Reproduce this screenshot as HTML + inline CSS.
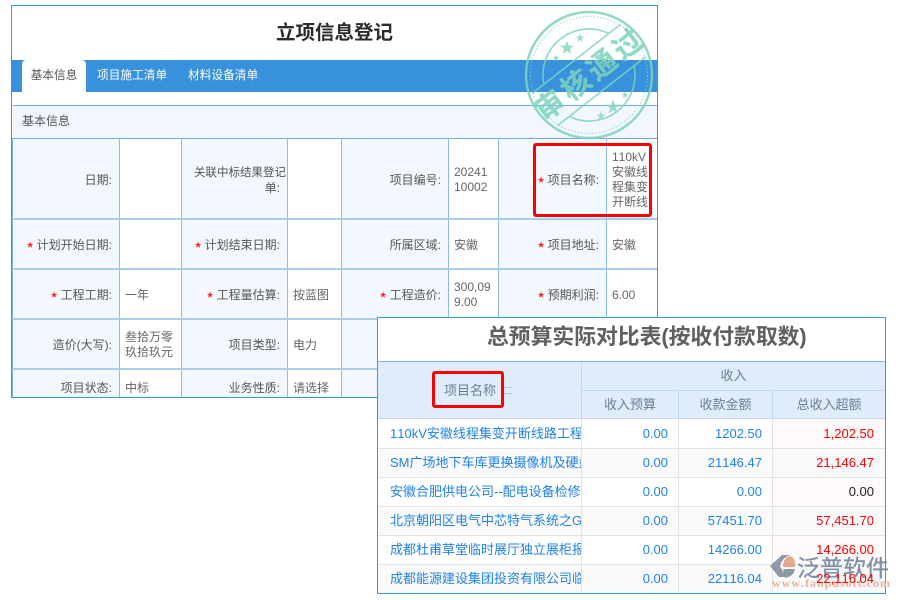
<!DOCTYPE html>
<html lang="zh"><head><meta charset="utf-8"><title>立项信息登记</title>
<style>
*{box-sizing:border-box}
html,body{margin:0;padding:0;background:#fff;width:900px;height:600px;overflow:hidden}
body{position:relative;font-family:"Liberation Sans","Noto Sans CJK SC",sans-serif;font-size:12px;color:#666;font-kerning:none}
.a{position:absolute}
#left{left:11px;top:5px;width:647px;height:393px;border:1px solid #2a9fd8;background:#fff;overflow:hidden}
#p2{left:377px;top:317px;width:509px;height:277px;border:1px solid #2a9fd8;background:#fff;overflow:hidden}
.c{position:absolute;display:flex;align-items:center;font-size:12px;line-height:15px;color:#666}
.l{justify-content:flex-end;text-align:right;padding-right:7px;color:#555}
.v{padding-left:5px}
.s{color:#f22;margin-right:3px;font-size:7px;line-height:15px}
.vl{position:absolute;width:1px;background:#8dbde6;top:132px;height:260px}
.hl{position:absolute;height:2px;background:#a9cdec;left:0;width:646px}
.n{position:absolute;left:12px;width:191px;white-space:nowrap;overflow:hidden;font-size:13px;color:#1e82ec;height:17px;line-height:17px}
.num{position:absolute;text-align:right;font-size:13px;color:#1e82ec;height:17px;line-height:17px}
.th{position:absolute;text-align:center;color:#6b7f92;font-size:13px;line-height:16px}
.red{position:absolute;border:3px solid #f00;border-radius:3px}
</style></head><body>
<div class="a" id="left">
<div class="a" style="left:0;width:645px;top:13px;text-align:center;font-size:19.5px;line-height:28px;font-weight:700;color:#2b2b2b">立项信息登记</div>
<div class="a" style="left:0;top:54px;width:646px;height:32px;background:#3891dc"></div>
<div class="a" style="left:10px;top:54px;width:64px;height:32px;background:#fff;border-radius:4px 4px 0 0;text-align:center;line-height:31px;font-size:11.7px;color:#555">基本信息</div>
<div class="a" style="left:85px;top:54px;line-height:31px;color:#fff;font-size:11.7px">项目施工清单</div>
<div class="a" style="left:176px;top:54px;line-height:31px;color:#fff;font-size:11.7px">材料设备清单</div>
<div class="a" style="left:1px;top:99px;width:645px;height:34px;background:#f2f6fe;border-top:1px solid #6fb0e0;border-bottom:1px solid #6fb0e0;line-height:31px;padding-left:9px;color:#555">基本信息</div>
<div class="a" style="left:1px;top:133px;width:106px;height:260px;background:#f2f8fe"></div>
<div class="a" style="left:170px;top:133px;width:105px;height:260px;background:#f2f8fe"></div>
<div class="a" style="left:330px;top:133px;width:106px;height:260px;background:#f2f8fe"></div>
<div class="a" style="left:487px;top:133px;width:107px;height:260px;background:#f2f8fe"></div>
<div class="vl" style="left:107px"></div><div class="vl" style="left:169px"></div><div class="vl" style="left:275px"></div><div class="vl" style="left:329px"></div><div class="vl" style="left:436px"></div><div class="vl" style="left:486px"></div><div class="vl" style="left:594px"></div>
<div class="a" style="left:0;top:132px;width:1px;height:260px;background:#6fb0e0"></div>
<div class="hl" style="top:212px"></div><div class="hl" style="top:262px"></div><div class="hl" style="top:312px"></div><div class="hl" style="top:362px"></div>

<div class="c l" style="left:1px;top:135px;width:106px;height:79px">日期:</div>
<div class="c l" style="left:170px;top:135px;width:105px;height:79px"><span><span style="position:relative;left:6px;white-space:nowrap;font-size:11.5px">关联中标结果登记</span><br>单:</span></div>
<div class="c l" style="left:330px;top:135px;width:106px;height:79px">项目编号:</div>
<div class="c v" style="left:437px;top:134px;width:49px;height:79px">20241<br>10002</div>
<div class="c l" style="left:487px;top:135px;width:107px;height:79px"><span class="s">★</span>项目名称:</div>
<div class="c v" style="left:595px;top:134px;width:51px;height:79px"><span>110kV<br>安徽线<br>程集变<br>开断线</span></div>

<div class="c l" style="left:1px;top:215px;width:106px;height:48px"><span class="s">★</span>计划开始日期:</div>
<div class="c l" style="left:170px;top:215px;width:105px;height:48px"><span class="s">★</span>计划结束日期:</div>
<div class="c l" style="left:330px;top:215px;width:106px;height:48px">所属区域:</div>
<div class="c v" style="left:437px;top:215px;height:48px">安徽</div>
<div class="c l" style="left:487px;top:215px;width:107px;height:48px"><span class="s">★</span>项目地址:</div>
<div class="c v" style="left:595px;top:215px;height:48px">安徽</div>

<div class="c l" style="left:1px;top:265px;width:106px;height:48px"><span class="s">★</span>工程工期:</div>
<div class="c v" style="left:108px;top:265px;height:48px">一年</div>
<div class="c l" style="left:170px;top:265px;width:105px;height:48px"><span class="s">★</span>工程量估算:</div>
<div class="c v" style="left:276px;top:265px;height:48px">按蓝图</div>
<div class="c l" style="left:330px;top:265px;width:106px;height:48px"><span class="s">★</span>工程造价:</div>
<div class="c v" style="left:437px;top:265px;height:48px">300,09<br>9.00</div>
<div class="c l" style="left:487px;top:265px;width:107px;height:48px"><span class="s">★</span>预期利润:</div>
<div class="c v" style="left:595px;top:265px;height:48px">6.00</div>

<div class="c l" style="left:1px;top:315px;width:106px;height:48px">造价(大写):</div>
<div class="c v" style="left:108px;top:315px;height:48px">叁拾万零<br>玖拾玖元</div>
<div class="c l" style="left:170px;top:315px;width:105px;height:48px">项目类型:</div>
<div class="c v" style="left:276px;top:315px;height:48px">电力</div>

<div class="c l" style="left:1px;top:368px;width:106px;height:28px">项目状态:</div>
<div class="c v" style="left:108px;top:368px;height:28px">中标</div>
<div class="c l" style="left:170px;top:368px;width:105px;height:28px">业务性质:</div>
<div class="c v" style="left:276px;top:368px;height:28px">请选择</div>
</div>

<div class="red" style="left:533px;top:143px;width:119px;height:74px"></div>

<svg class="a" style="left:520px;top:5px" width="140" height="140" viewBox="0 0 140 140" fill="none" stroke="#7dd3bd">
<g opacity=".85">
<circle cx="69" cy="70" r="63" stroke-width="2.5"/>
<circle cx="69" cy="70" r="58.5" stroke-width="1" stroke-dasharray="1.5 2"/>
<g transform="translate(69 70) rotate(-38)" stroke-width="1.6">
<path d="M-56 -20.5H56M-56 20.5H56"/>
<path d="M-41.2 -20.5A46 46 0 0 1 41.2 -20.5M-41.2 20.5A46 46 0 0 0 41.2 20.5"/>
<text x="2" y="10" text-anchor="middle" font-size="29" font-weight="700" fill="#7dd3bd" stroke="#7dd3bd" stroke-width=".3" letter-spacing="4" font-family="'Liberation Sans','Noto Sans CJK SC',sans-serif">审核通过</text>
</g>
<g fill="#86d6c2" stroke="none">
<path transform="translate(47 43) scale(7.5)" d="M0-1 .225-.309H.951L.363.118.588.809 0 .382-.588.809-.363.118-.951-.309H-.225Z"/>
<path transform="translate(60 33) scale(4.8)" d="M0-1 .225-.309H.951L.363.118.588.809 0 .382-.588.809-.363.118-.951-.309H-.225Z"/>
<path transform="translate(36 53) scale(3.8)" d="M0-1 .225-.309H.951L.363.118.588.809 0 .382-.588.809-.363.118-.951-.309H-.225Z"/>
<path transform="translate(93 102) scale(7.5)" d="M0-1 .225-.309H.951L.363.118.588.809 0 .382-.588.809-.363.118-.951-.309H-.225Z"/>
<path transform="translate(81 111) scale(4.8)" d="M0-1 .225-.309H.951L.363.118.588.809 0 .382-.588.809-.363.118-.951-.309H-.225Z"/>
<path transform="translate(105 90) scale(3.8)" d="M0-1 .225-.309H.951L.363.118.588.809 0 .382-.588.809-.363.118-.951-.309H-.225Z"/>
</g>
</g></svg>

<div class="a" id="p2">
<div class="a" style="left:109px;top:3px;white-space:nowrap;font-size:21.8px;line-height:32px;font-weight:700;color:#5f5f5f">总预算实际对比表(按收付款取数)</div>
<div class="a" style="left:0;top:43px;width:507px;height:58px;background:#deecfb;border-top:1px solid #7cb8e2;border-bottom:1px solid #c3d8ea"></div>
<div class="a" style="left:203px;top:72px;width:304px;height:1px;background:#c3d8ea"></div>
<div class="a" style="left:394px;top:101px;width:113px;height:174px;background:#fdfaf9"></div>
<div class="a" style="left:0;top:130px;width:507px;height:29px;background:#fafafa"></div>
<div class="a" style="left:0;top:188px;width:507px;height:29px;background:#fafafa"></div>
<div class="a" style="left:0;top:246px;width:507px;height:29px;background:#fafafa"></div>
<div class="a" style="left:203px;top:44px;width:1px;height:57px;background:#c3d8ea"></div>
<div class="a" style="left:300px;top:72px;width:1px;height:29px;background:#c3d8ea"></div>
<div class="a" style="left:394px;top:72px;width:1px;height:29px;background:#c3d8ea"></div>
<div class="a" style="left:203px;top:101px;width:1px;height:174px;background:#e3e3e3"></div>
<div class="a" style="left:300px;top:101px;width:1px;height:174px;background:#e3e3e3"></div>
<div class="a" style="left:394px;top:101px;width:1px;height:174px;background:#e3e3e3"></div>
<div class="a" style="left:0;top:130px;width:507px;height:1px;background:#e3e3e3"></div>
<div class="a" style="left:0;top:159px;width:507px;height:1px;background:#e3e3e3"></div>
<div class="a" style="left:0;top:188px;width:507px;height:1px;background:#e3e3e3"></div>
<div class="a" style="left:0;top:217px;width:507px;height:1px;background:#e3e3e3"></div>
<div class="a" style="left:0;top:246px;width:507px;height:1px;background:#e3e3e3"></div>

<div class="th" style="left:66px;top:65px">项目名称</div>
<div class="a" style="left:124px;top:69px;width:10px;height:7px;border-top:1px solid #b5cfe6;border-bottom:1px solid #b5cfe6"></div>
<div class="th" style="left:204px;top:50px;width:303px">收入</div>
<div class="th" style="left:204px;top:79px;width:96px">收入预算</div>
<div class="th" style="left:301px;top:79px;width:93px">收款金额</div>
<div class="th" style="left:395px;top:79px;width:112px">总收入超额</div>

<div class="n" style="top:107px">110kV安徽线程集变开断线路工程</div>
<div class="n" style="top:136px">SM广场地下车库更换摄像机及硬盘</div>
<div class="n" style="top:165px">安徽合肥供电公司--配电设备检修维</div>
<div class="n" style="top:194px">北京朝阳区电气中芯特气系统之G</div>
<div class="n" style="top:223px">成都杜甫草堂临时展厅独立展柜报</div>
<div class="n" style="top:252px">成都能源建设集团投资有限公司临</div>

<div class="num" style="left:240px;width:50px;top:107px">0.00</div><div class="num" style="left:304px;width:80px;top:107px">1202.50</div><div class="num" style="left:400px;width:96px;top:107px;color:#f00">1,202.50</div>
<div class="num" style="left:240px;width:50px;top:136px">0.00</div><div class="num" style="left:304px;width:80px;top:136px">21146.47</div><div class="num" style="left:400px;width:96px;top:136px;color:#f00">21,146.47</div>
<div class="num" style="left:240px;width:50px;top:165px">0.00</div><div class="num" style="left:304px;width:80px;top:165px">0.00</div><div class="num" style="left:400px;width:96px;top:165px;color:#222">0.00</div>
<div class="num" style="left:240px;width:50px;top:194px">0.00</div><div class="num" style="left:304px;width:80px;top:194px">57451.70</div><div class="num" style="left:400px;width:96px;top:194px;color:#f00">57,451.70</div>
<div class="num" style="left:240px;width:50px;top:223px">0.00</div><div class="num" style="left:304px;width:80px;top:223px">14266.00</div><div class="num" style="left:400px;width:96px;top:223px;color:#f00;z-index:5">14,266.00</div>
<div class="num" style="left:240px;width:50px;top:252px">0.00</div><div class="num" style="left:304px;width:80px;top:252px">22116.04</div><div class="num" style="left:400px;width:96px;top:252px;color:#f00;z-index:5">22,116.04</div>
</div>

<div class="red" style="left:432px;top:371px;width:72px;height:37px"></div>

<svg class="a" style="left:770px;top:555px;z-index:3" width="125" height="40" viewBox="0 0 125 40">
<path d="M0 11L12 0H20Q12 3 10 11L16 22H9Z" fill="#8d99a8"/>
<path d="M13 14H25Q24 21 15 23Z" fill="#8d99a8"/>
<path d="M13 12Q13 3 20 1Q26 3 25 12Z" fill="#e2a98c"/>
<text x="27" y="21" font-size="23" fill="#8090a8" stroke="#8090a8" stroke-width=".3" font-family="'Liberation Sans','Noto Sans CJK SC',sans-serif">泛普软件</text>
<text x="2" y="32" font-size="12" font-weight="700" fill="#e5b39c" letter-spacing="1" font-family="'Liberation Serif',serif">www.fanpusoft.com</text>
</svg>
</body></html>
